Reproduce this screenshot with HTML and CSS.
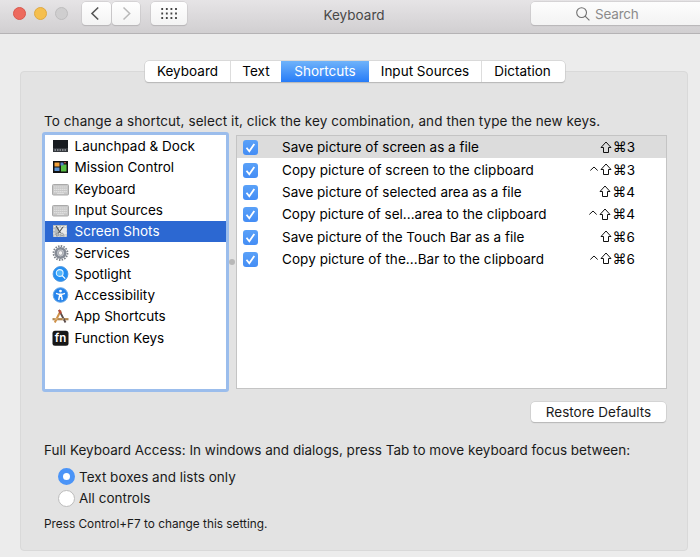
FILE: index.html
```html
<!DOCTYPE html>
<html lang="en">
<head>
<meta charset="utf-8">
<title>Keyboard</title>
<link rel="stylesheet" href="styles.css">
</head>
<body>
<header class="toolbar">
  <div class="lights"><i class="light red"></i><i class="light yellow"></i><i class="light off"></i></div>
  <div class="nav">
    <button class="tool back"><svg width="28" height="23" viewBox="0 0 28 23"><path d="M16.2 5.5 10 11.5l6.2 6" fill="none" stroke="#555" stroke-width="1.6"/></svg></button>
    <button class="tool forward"><svg width="28" height="23" viewBox="0 0 28 23"><path d="m11.5 5.5 6.2 6-6.2 6" fill="none" stroke="#b8b8b8" stroke-width="1.5"/></svg></button>
  </div>
  <button class="tool all"><svg width="36" height="23" viewBox="0 0 36 23"><path d="M10.3 7h16M10.3 11.5h16M10.3 16h16" stroke="#444" stroke-width="1.8" stroke-dasharray="1.8 2.8"/></svg></button>
  <h1 class="title">Keyboard</h1>
  <div class="search"><svg width="14" height="14" viewBox="0 0 14 14" fill="none" stroke="#707070" stroke-width="1.1"><circle cx="5.6" cy="5.6" r="4.9"/><path d="m9.1 9.1 4.3 4.3"/></svg><span>Search</span></div>
</header>
<main>
  <nav class="tabs">
    <span class="tab t1">Keyboard</span><span class="tab t2">Text</span><span class="tab t3 active">Shortcuts</span><span class="tab t4">Input Sources</span><span class="tab t5">Dictation</span>
  </nav>
  <section class="panel">
    <p class="hint">To change a shortcut, select it, click the key combination, and then type the new keys.</p>
    <div class="lists">
      <ul class="categories">
        <li><svg viewBox="0 0 17 16"><path d="M1 2h15v12H1z" fill="#171b20"/><path d="M1 10h15v4H1z" fill="#34383e"/><path d="M2.5 12h12" stroke="#c8cbd0" stroke-dasharray="1.5 1"/></svg><span>Launchpad &amp; Dock</span></li>
        <li><svg viewBox="0 0 17 16"><path d="M1 2h15v12H1z" fill="#111"/><path d="M2.5 3.5h5v4h-5z" fill="#f2a23d"/><path d="M2.5 8.5h5V12h-5z" fill="#5c92d0"/><path d="M9 5.5h5.5v7H9z" fill="#56bd43"/><path d="M8.5 3.5h3v3h-3z" fill="#5680c7"/><path d="M12 3.3h2v1h-2z" fill="#d7595a"/></svg><span>Mission Control</span></li>
        <li><svg viewBox="0 0 17 16"><rect x=".5" y="3.5" width="16" height="10.5" rx="1" fill="#c8c8c8" stroke="#aaa"/><path d="M2 6h13M2 8.3h13M2 10.6h13" stroke="#e0e0e0" stroke-width="1.2" stroke-dasharray="1.4 .5"/><path d="M5 12.4h7" stroke="#e0e0e0"/></svg><span>Keyboard</span></li>
        <li><svg viewBox="0 0 17 16"><rect x=".5" y="3.5" width="16" height="10.5" rx="1" fill="#c8c8c8" stroke="#aaa"/><path d="M2 6h13M2 8.3h13M2 10.6h13" stroke="#e0e0e0" stroke-width="1.2" stroke-dasharray="1.4 .5"/><path d="M5 12.4h7" stroke="#e0e0e0"/></svg><span>Input Sources</span></li>
        <li class="selected"><svg viewBox="0 0 17 16"><path d="M1 2h14v12H1z" fill="#b6bbbd"/><path d="M7 4.5h7.5v7H7z" fill="#e8eaeb"/><path d="M2 3.5h12v9.5H2z" fill="none" stroke="#eee" stroke-dasharray="2 1.5"/><path d="m4 3 4.5 7" stroke="#4c5152" stroke-width="1.1"/><path d="m11 4-4.5 6" stroke="#4c5152" stroke-width="1.1"/><circle cx="5.5" cy="11.5" r="1.4" fill="none" stroke="#8a8f90" stroke-width=".8"/><circle cx="10" cy="11.5" r="1.4" fill="none" stroke="#8a8f90" stroke-width=".8"/></svg><span>Screen Shots</span></li>
        <li><svg viewBox="0 0 17 16"><circle cx="8.5" cy="8" r="7" fill="none" stroke="#7b8088" stroke-width="1.8" stroke-dasharray="1.5 1.25"/><circle cx="8.5" cy="8" r="4.7" fill="#c8cbd1" stroke="#858b95" stroke-width="2.6"/><circle cx="8.5" cy="8" r="2.3" fill="#f4f4f4" stroke="#a5a8ae"/></svg><span>Services</span></li>
        <li><svg viewBox="0 0 17 16"><circle cx="8.5" cy="8" r="7.4" fill="#238ff3" stroke="#4a94de"/><circle cx="7.7" cy="7" r="3.4" fill="#53b5fc" stroke="#e0f4ff" stroke-width="1.1"/><path d="m10.2 9.6 3 3" stroke="#fff" stroke-width="1.3"/></svg><span>Spotlight</span></li>
        <li><svg viewBox="0 0 17 16"><circle cx="8.5" cy="8" r="7.3" fill="#2684eb" stroke="#67a8e9"/><circle cx="8.5" cy="4.1" r="1.4" fill="#fff"/><path d="m4 6.4 3 .9h3l3-.9M8.5 7v3M7.7 8l-1 5M9.3 8l1 5" fill="none" stroke="#fff" stroke-width="1.4"/></svg><span>Accessibility</span></li>
        <li><svg viewBox="0 0 17 16"><path d="M.5 11.2h16" stroke="#b08650" stroke-width="2.2"/><path d="m8.8 2.5-6 12" stroke="#cf9148" stroke-width="2"/><path d="m7 2 6.5 12.5" stroke="#5b4c49" stroke-width="1.8"/><path d="m7 2 2 3.5" stroke="#bc4d3c" stroke-width="2"/><path d="m2.5 11 3-.1M10 11h2" stroke="#e4c795"/></svg><span>App Shortcuts</span></li>
        <li><svg viewBox="0 0 17 16"><rect x=".5" y=".8" width="16" height="15" rx="2.5" fill="#171717"/><text class="fn" x="8.5" y="12.2" text-anchor="middle">fn</text></svg><span>Function Keys</span></li>
      </ul>
      <div class="splitter"><i></i></div>
      <div class="shortcuts">
        <div class="row current"><i class="check"><svg viewBox="0 0 15 15"><path d="m3.5 7.8 2.8 3.4 5-7.3"/></svg></i><span class="name">Save picture of screen as a file</span><span class="keys"><svg class="shift" viewBox="0 0 12 13"><path d="M6 1 11 6.5H8.5v5h-5v-5H1z"/></svg><b>⌘</b>3</span></div>
        <div class="row"><i class="check"><svg viewBox="0 0 15 15"><path d="m3.5 7.8 2.8 3.4 5-7.3"/></svg></i><span class="name wide">Copy picture of screen to the clipboard</span><span class="keys"><svg class="control" viewBox="0 0 10 12"><path d="M1.3 6.5 5 3l3.7 3.5"/></svg><svg class="shift" viewBox="0 0 12 13"><path d="M6 1 11 6.5H8.5v5h-5v-5H1z"/></svg><b>⌘</b>3</span></div>
        <div class="row"><i class="check"><svg viewBox="0 0 15 15"><path d="m3.5 7.8 2.8 3.4 5-7.3"/></svg></i><span class="name">Save picture of selected area as a file</span><span class="keys"><svg class="shift" viewBox="0 0 12 13"><path d="M6 1 11 6.5H8.5v5h-5v-5H1z"/></svg><b>⌘</b>4</span></div>
        <div class="row"><i class="check"><svg viewBox="0 0 15 15"><path d="m3.5 7.8 2.8 3.4 5-7.3"/></svg></i><span class="name">Copy picture of sel...area to the clipboard</span><span class="keys"><svg class="control" viewBox="0 0 10 12"><path d="M1.3 6.5 5 3l3.7 3.5"/></svg><svg class="shift" viewBox="0 0 12 13"><path d="M6 1 11 6.5H8.5v5h-5v-5H1z"/></svg><b>⌘</b>4</span></div>
        <div class="row"><i class="check"><svg viewBox="0 0 15 15"><path d="m3.5 7.8 2.8 3.4 5-7.3"/></svg></i><span class="name">Save picture of the Touch Bar as a file</span><span class="keys"><svg class="shift" viewBox="0 0 12 13"><path d="M6 1 11 6.5H8.5v5h-5v-5H1z"/></svg><b>⌘</b>6</span></div>
        <div class="row"><i class="check"><svg viewBox="0 0 15 15"><path d="m3.5 7.8 2.8 3.4 5-7.3"/></svg></i><span class="name wide">Copy picture of the...Bar to the clipboard</span><span class="keys"><svg class="control" viewBox="0 0 10 12"><path d="M1.3 6.5 5 3l3.7 3.5"/></svg><svg class="shift" viewBox="0 0 12 13"><path d="M6 1 11 6.5H8.5v5h-5v-5H1z"/></svg><b>⌘</b>6</span></div>
      </div>
    </div>
    <button class="restore">Restore Defaults</button>
    <p class="access">Full Keyboard Access: In windows and dialogs, press Tab to move keyboard focus between:</p>
    <div class="options">
      <label><i class="radio on"></i><span>Text boxes and lists only</span></label>
      <label><i class="radio"></i><span>All controls</span></label>
    </div>
    <p class="note">Press Control+F7 to change this setting.</p>
  </section>
</main>
</body>
</html>
```
FILE: styles.css
```css
* { box-sizing: border-box; }
body { margin: 0; width: 700px; height: 557px; overflow: hidden; background: #ececec; color: #1a1a1a; font: 13.5px/20px Inter, "Noto Sans", sans-serif; letter-spacing: .01px; white-space: nowrap; }
h1, p, ul { margin: 0; padding: 0; }
button { font: inherit; letter-spacing: inherit; color: inherit; border: 0; padding: 0; }
svg { display: block; flex: none; }
.toolbar { display: flex; align-items: flex-start; height: 34px; padding-top: 2px; border-bottom: 1px solid #b5b3b5; background: linear-gradient(#e6e4e6, #d1cfd1); }
.toolbar > * { flex: none; }
.lights { display: flex; gap: 8px; padding: 5px 0 0 12.5px; width: 82px; }
.light { width: 13.3px; height: 13.3px; border-radius: 50%; flex: none; }
.red { background: #ed6a5e; border: 1px solid #d9584e; }
.yellow { background: #f5bf4f; border: 1px solid #dfa942; }
.off { background: #cfcecf; border: 1px solid #bebdbe; }
.nav { display: flex; gap: 1px; }
.tool { height: 23px; border-radius: 4px; background: linear-gradient(#fff, #f3f3f3); box-shadow: 0 0 0 .5px #c6c4c6, 0 1px 1px #aaa8aa; }
.back { width: 29px; }
.forward { width: 28px; }
.all { width: 36px; margin-left: 11px; }
.title { width: 140px; margin: 3px 0 0 97px; text-align: center; font-size: 13.5px; font-weight: 400; color: #484848; }
.search { display: flex; align-items: center; width: 180px; height: 23px; margin-left: 107px; padding-left: 45px; gap: 5px; border-radius: 4px; color: #8b8b8b; background: linear-gradient(#fdfdfd, #f3f3f3); box-shadow: 0 0 0 .5px #c6c4c6, 0 1px 1px #aaa8aa; }
.search span { padding-top: 1px; letter-spacing: -.2px; }
main { padding: 27px 12px 0 20px; }
.tabs { display: flex; position: relative; z-index: 1; width: 420px; height: 21px; margin: 0 0 -11px 125px; border-radius: 4px; background: #fff; box-shadow: 0 0 0 .5px #c5c5c5, 0 1px 1px #aaa; }
.tab { text-align: center; line-height: 21px; border-right: 1px solid #ddd; color: #000; }
.t1 { width: 86px; }
.t2 { width: 50px; border-right: 0; }
.t3 { width: 88px; border: 0; }
.t4 { width: 113px; }
.t5 { width: 81px; border: 0; }
.active { color: #fff; background: linear-gradient(#6fb3fa, #277cf8); }
.panel { height: 480px; padding: 39px 20px 0 22px; border: 1px solid #d9d9d9; border-radius: 4px; background: #e3e3e3; }
.hint { padding-left: 1px; height: 21px; letter-spacing: .08px; }
.lists { display: flex; height: 260px; }
.categories { flex: none; width: 187px; height: 260px; margin-left: -1px; border: 3px solid #9bbdec; border-radius: 3px; background: #fff; list-style: none; padding-top: .4px; color: #000; }
.categories li { display: flex; align-items: center; gap: 5.5px; height: 21.3px; padding-left: 7px; }
.categories li svg { width: 17px; height: 16px; }
.categories .selected { color: #fff; background: #2c68d2; }
.fn { fill: #fff; font: 600 11.5px Inter; }
.splitter { flex: none; width: 7px; padding-top: 127px; }
.splitter i { display: block; width: 6px; height: 6px; border-radius: 50%; background: #b8b8b8; }
.shortcuts { flex: none; width: 431px; height: 254px; margin-top: 3px; border: 1px solid #c4c4c4; background: #fff; color: #000; }
.row { display: flex; align-items: center; height: 22.35px; padding: 0 31px 0 6px; }
.current { background: #dcdcdc; }
.check { width: 15px; height: 15px; margin: 1px 24px 0 0; border-radius: 3px; background: linear-gradient(#5aa1f8, #448df5); }
.check path { fill: none; stroke: #fff; stroke-width: 1.8; }
.name { flex: 1; }
.wide { letter-spacing: .06px; }
.keys { display: flex; align-items: center; }
.keys b { width: 14px; font: 14px/20px "DejaVu Sans"; text-align: center; }
.keys path { fill: none; stroke: #111; stroke-width: 1; }
.shift { width: 12px; height: 13px; margin-right: 1px; }
.control { width: 10px; height: 12px; margin-right: 1px; }
.restore { display: block; width: 135px; height: 20px; margin: 10px 0 0 488px; border-radius: 4px; background: #fff; box-shadow: 0 0 0 .5px #c5c5c5, 0 1px 1px #aaa; }
.access { margin: 18px 0 0 1px; }
.options { margin: 6px 0 0 15px; }
.options label { display: flex; align-items: center; height: 21.5px; gap: 4px; }
.radio { width: 17px; height: 17px; border-radius: 50%; background: #fff; border: 1px solid #bcbcbc; }
.radio.on { border: 5.5px solid #4b94f7; }
.note { margin: 5px 0 0 1px; font-size: 11.8px; }
```
